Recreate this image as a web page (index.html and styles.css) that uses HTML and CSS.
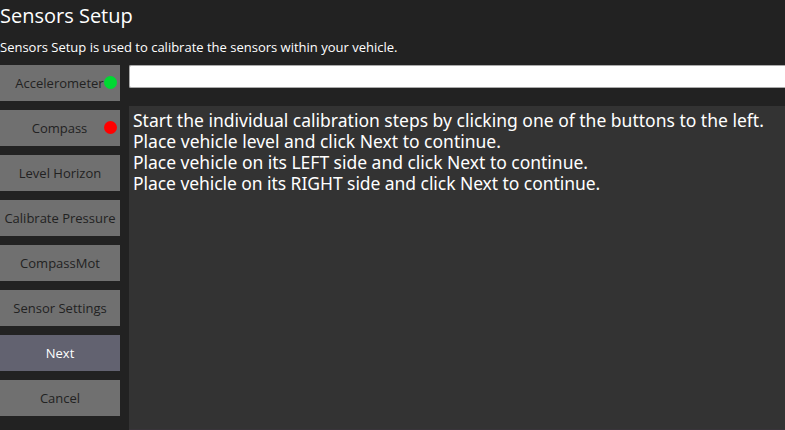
FILE: index.html
```html
<!DOCTYPE html>
<html lang="en">
<head>
<meta charset="utf-8">
<title>Sensors Setup</title>
<link rel="stylesheet" href="styles.css">
</head>
<body>
<main class="page">
  <h1 class="title">Sensors Setup</h1>
  <p class="description">Sensors Setup is used to calibrate the sensors within your vehicle.</p>
  <div class="content">
    <nav class="sidebar">
      <button class="btn btn-status"><span>Accelerometer</span><i class="dot dot-ok"></i></button>
      <button class="btn btn-status"><span>Compass</span><i class="dot dot-bad"></i></button>
      <button class="btn"><span>Level Horizon</span></button>
      <button class="btn"><span>Calibrate Pressure</span></button>
      <button class="btn"><span>CompassMot</span></button>
      <button class="btn"><span>Sensor Settings</span></button>
      <button class="btn btn-primary"><span>Next</span></button>
      <button class="btn"><span>Cancel</span></button>
    </nav>
    <section class="panel">
      <div class="progress"></div>
      <div class="log">
        <p>Start the individual calibration steps by clicking one of the buttons to the left.</p>
        <p>Place vehicle level and click Next to continue.</p>
        <p class="left-side">Place vehicle on its LEFT side and click Next to continue.</p>
        <p class="right-side">Place vehicle on its RIGHT side and click Next to continue.</p>
      </div>
    </section>
  </div>
</main>
</body>
</html>
```
FILE: styles.css
```css
* { box-sizing: border-box; }
body {
  margin: 0;
  background: #222;
  color: #fff;
  font-family: "Open Sans", "Noto Sans", sans-serif;
  font-size: 13px;
  overflow: hidden;
}
.page { height: 430px; display: flex; flex-direction: column; }
.title { margin: 0; padding-top: 2px; height: 38px; font-size: 20px; line-height: 28px; font-weight: 400; }
.description { margin: 0; height: 27px; line-height: 19px; white-space: nowrap; }
.content { flex: 1; min-height: 0; display: flex; gap: 9px; }
.sidebar { width: 120px; display: flex; flex-direction: column; gap: 9px; }
.btn {
  position: relative;
  flex: none;
  height: 36px;
  padding: 0;
  border: 0;
  background: #707070;
  color: #222;
  font: inherit;
  white-space: nowrap;
}
.btn-status { padding-right: 1px; }
.btn-primary { background: #626270; color: #fff; }
.dot { position: absolute; top: 10.6px; right: 2.8px; width: 13.4px; height: 13.4px; border-radius: 50%; }
.dot-ok { background: #00d932; }
.dot-bad { background: #f00; }
.panel { flex: 1; min-width: 0; display: flex; flex-direction: column; gap: 18px; }
.progress { height: 23px; background: #fff; border: 1px solid #aaa; border-right: 0; border-radius: 2px 0 0 2px; }
.log { flex: 1; background: #333; border-bottom: 1px solid #38343a; padding: 4px; font-family: "Noto Sans", "Open Sans", sans-serif; font-size: 17.5px; }
.log p { margin: 0; height: 21px; line-height: 20px; white-space: nowrap; }
.log .left-side { letter-spacing: -0.02px; }
.log .right-side { letter-spacing: -0.06px; }
```
